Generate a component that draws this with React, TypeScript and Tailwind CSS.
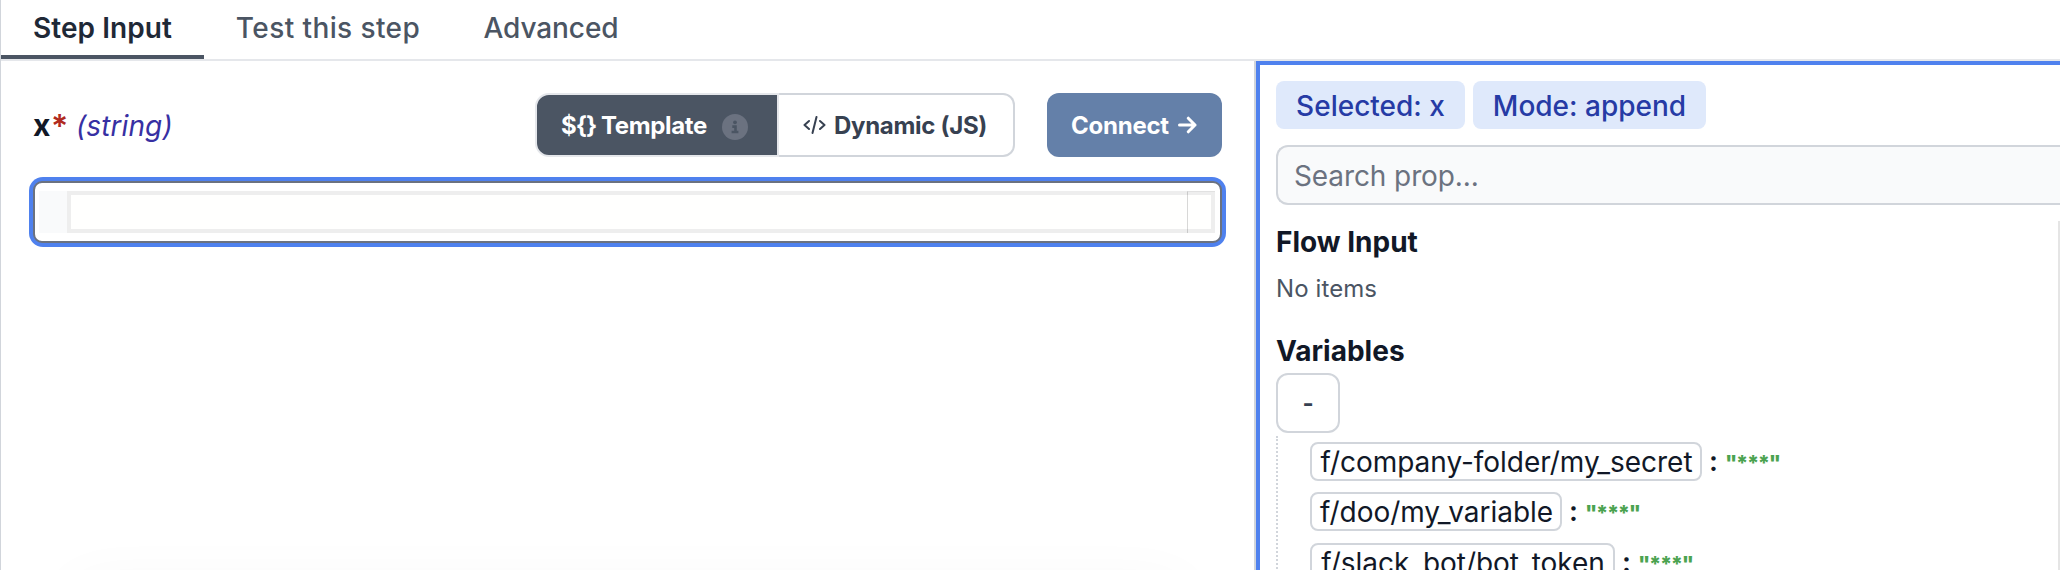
import React from "react";

const tabs = [
  { label: "Step Input", active: true, style: "w-[203px] tracking-[0.05px]" },
  { label: "Test this step", active: false, style: "w-[248px] tracking-[0.4px]" },
  { label: "Advanced", active: false, style: "w-[198px] tracking-[-0.1px]" },
];

const variables = [
  { name: "f/company-folder/my_secret", width: "w-[392px]", row: "h-[50px]" },
  { name: "f/doo/my_variable", width: "w-[252px]", row: "h-[51px]" },
  { name: "f/slack_bot/bot_token", width: "w-[305px]", row: "h-[50px]" },
];

function Tabs() {
  return (
    <div className="flex h-[61px] shrink-0 border-b-2 border-[#e5e7eb] text-[28px] leading-[40px]">
      {tabs.map((t) => (
        <div
          key={t.label}
          className={
            "flex h-[59px] justify-center whitespace-nowrap pt-2 " +
            t.style +
            (t.active
              ? " border-b-4 border-[#4b5563] font-semibold text-[#1f2937]"
              : " font-medium text-[#4b5563]")
          }
        >
          {t.label}
        </div>
      ))}
    </div>
  );
}

function InfoIcon() {
  return (
    <svg className="mt-1 ml-[15px] h-[26px] w-[26px] shrink-0" viewBox="0 0 26 26">
      <circle cx="13" cy="13" r="13" fill="#6b7280" />
      <circle cx="13" cy="8.3" r="1.9" fill="#4b5563" />
      <path d="M10.3 12.600h3.200v5.200M9.600 18h6.800" fill="none" stroke="#4b5563" strokeWidth="2.600" />
    </svg>
  );
}

function CodeIcon() {
  return (
    <svg
      className="mr-[8px] h-[18px] w-[23px] shrink-0"
      viewBox="0 0 23 18"
      fill="none"
      stroke="#374151"
      strokeWidth="2"
      strokeLinecap="round"
      strokeLinejoin="round"
    >
      <path d="M6 5 1.5 9 6 13M17 5l4.500 4L17 13M13.500 1 9.500 17" />
    </svg>
  );
}

function ArrowIcon() {
  return (
    <svg
      className="ml-[9px] h-[18px] w-[19px] shrink-0"
      viewBox="0 0 19 18"
      fill="none"
      stroke="white"
      strokeWidth="3"
      strokeLinecap="round"
      strokeLinejoin="round"
    >
      <path d="M1.500 9H17M10.300 2.200 17 9l-6.700 6.800" />
    </svg>
  );
}

function InputPane() {
  return (
    <div className="relative flex w-[1253px] shrink-0 flex-col overflow-hidden pt-8 pl-7">
      <div className="flex h-16 items-center pl-1 text-[28px]">
        <span className="w-[18px] pt-px text-[30px] font-bold text-[#111827]">x</span>
        <span className="w-[16px] pt-1 text-[32px] font-semibold text-[#b02a20]">*</span>
        <span className="ml-[9px] pt-0.5 text-[28px] italic tracking-[0.1px] text-[#3730a3]">(string)</span>
        <div className="mr-8 ml-auto flex h-16 w-[480px] text-[24px] font-bold">
          <div className="flex w-[244px] items-center rounded-l-[14px] border-2 border-[#e5e7eb] bg-[#4b5563] pl-6 whitespace-nowrap text-white">
            <span className="pt-0.5 tracking-[-0.35px]">
              <span className="tracking-[-1px]">{"${} "}</span>Template
            </span>
            <InfoIcon />
          </div>
          <div className="flex flex-1 items-center rounded-r-[12px] border-2 border-l-0 border-[#d1d5db] pl-6 tracking-[-0.3px] whitespace-nowrap text-[#374151]">
            <CodeIcon />
            <span className="pt-0.5">Dynamic (JS)</span>
          </div>
        </div>
        <div className="mr-8 flex h-16 w-[175px] items-center justify-center rounded-[12px] bg-[#6480a9] pr-px text-[24px] font-bold tracking-[-0.25px] text-white">
          <span className="pt-0.5">Connect</span>
          <ArrowIcon />
        </div>
      </div>
      <div className="mt-5 flex h-[70px] w-[1197px] rounded-[14px] bg-[#4f81ee] p-1">
        <div className="flex flex-1 rounded-[9px] border-2 border-[#6b7280] bg-white px-1 py-2">
          <div className="w-[28px] bg-[#f9fafb]" />
          <div className="relative w-[1148px] border-4 border-[#eeeeee] bg-[#fffffe]">
            <div className="absolute -top-1 -right-1 h-[42px] w-[28px] border-t border-l border-t-black/5 border-l-black/15" />
          </div>
        </div>
      </div>
      <div className="absolute top-[523px] left-[72px] h-[80px] w-[1110px] rounded-lg shadow-[0_0_60px_rgba(0,0,0,0.04)]" />
    </div>
  );
}

function PropPicker() {
  return (
    <div className="flex min-w-0 flex-1 border-l-2 border-[#d1d5db]">
      <div className="flex min-w-0 flex-1 flex-col overflow-hidden border-t-4 border-l-4 border-[#4f81ee] pt-4 pl-4">
        <div className="flex shrink-0 gap-2 text-[28px] font-medium text-[#263ba5]">
          <span className="flex h-12 w-[189px] items-center justify-center rounded-lg bg-[#dfe9fb] pt-0.5 whitespace-nowrap">
            Selected: x
          </span>
          <span className="flex h-12 w-[233px] items-center justify-center rounded-lg bg-[#dfe9fb] pt-0.5 whitespace-nowrap">
            Mode: append
          </span>
        </div>
        <div className="mt-4 flex h-[60px] shrink-0 items-center rounded-l-[12px] border-2 border-r-0 border-[#d1d5db] bg-[#f9fafb] pt-0.5 pl-4 text-[28px] tracking-[-0.1px] text-[#6b7280]">
          Search prop...
        </div>
        <div className="mt-4 flex flex-1 flex-col items-start border-r-2 border-[#e5e5e5] text-[#111827]">
          <h2 className="h-10 text-[28px] leading-[42px] font-bold">Flow Input</h2>
          <p className="mt-2 h-10 text-[24px] leading-[40px] tracking-[0.1px] text-[#4b5563]">No items</p>
          <h2 className="mt-[22px] h-[42px] text-[28px] leading-[40px] font-bold">Variables</h2>
          <div className="flex h-[60px] w-16 items-center justify-center rounded-[12px] border-2 border-[#d1d5db] pt-0.5 text-[24px] font-bold text-[#374151]">
            -
          </div>
          <div className="mt-[3px] flex w-full flex-1 flex-col border-l-2 border-dotted border-[#d1d5db] pt-[6px] pl-8">
            {variables.map((v) => (
              <div key={v.name} className={"flex shrink-0 items-start " + v.row}>
                <span
                  className={
                    "flex h-[39px] items-center justify-center rounded-lg border-2 border-[#d1d5db] pl-px text-[28px] tracking-[-0.04px] whitespace-nowrap " +
                    v.width
                  }
                >
                  {v.name}
                </span>
                <span className="ml-[7px] text-[28px] leading-[39px] font-semibold">:</span>
                <span className="ml-[7px] text-[21px] leading-[43px] font-extrabold tracking-[-1.300px] text-[#4ba350]">"***"</span>
              </div>
            ))}
          </div>
        </div>
      </div>
    </div>
  );
}

export default function App() {
  return (
    <div className="flex h-[570px] w-[2060px] flex-col overflow-hidden border-l border-[#d1d5db] bg-white font-['Inter',sans-serif]">
      <Tabs />
      <div className="flex min-h-0 flex-1">
        <InputPane />
        <PropPicker />
      </div>
    </div>
  );
}
